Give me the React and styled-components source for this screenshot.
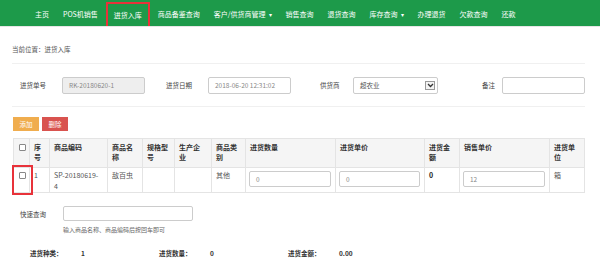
import React from 'react';
import styled, { createGlobalStyle } from 'styled-components';

const GlobalStyle = createGlobalStyle`
  body {
    margin: 0;
    background: #fff;
    font-family: "Noto Sans CJK SC", "Noto Sans", sans-serif;
    color: #333;
  }
  * { box-sizing: border-box; }
`;

const NavBar = styled.div`
  display: flex;
  align-items: flex-end;
  height: 27px;
  padding-left: 28px;
  background: #1d9a4a;
  border-bottom: 1px solid #e6e6e6;
`;

const NavItem = styled.div`
  display: flex;
  align-items: center;
  height: 24px;
  padding: 0 ${(p) => (p.$active ? '6px' : '7px')};
  margin: 0 ${(p) => (p.$active ? '1px' : '0')};
  font-size: 7px;
  color: #fff;
  white-space: nowrap;
  border: ${(p) => (p.$active ? '2px solid #e8323a' : 'none')};
  border-bottom: none;
`;

const Caret = styled.span`
  margin-left: 3px;
  font-size: 6px;
`;

const Page = styled.div`
  padding: 0 15px 0 12px;
`;

const Breadcrumb = styled.div`
  margin-top: 18px;
  font-size: 6.5px;
  line-height: 9px;
  color: #555;
`;

const FormPanel = styled.div`
  display: flex;
  align-items: center;
  height: 44px;
  margin-top: 9px;
  padding-left: 8px;
  border-top: 1px solid #f0f0f0;
  border-bottom: 1px solid #f0f0f0;
`;

const Field = styled.div`
  display: flex;
  align-items: center;
  margin-right: ${(p) => p.$gap || 0}px;
`;

const Label = styled.span`
  width: ${(p) => p.$w}px;
  font-size: 6.5px;
  color: #444;
  white-space: nowrap;
`;

const TextInput = styled.div`
  display: flex;
  align-items: center;
  width: ${(p) => p.$w}px;
  height: ${(p) => p.$h || 17}px;
  padding-left: 6px;
  font-size: 6.5px;
  font-weight: normal;
  color: #888;
  background: ${(p) => (p.$disabled ? '#eee' : '#fff')};
  border: 1px solid #ccc;
  border-radius: 2px;
`;

const SelectBox = styled(TextInput)`
  justify-content: space-between;
  padding-right: 2px;
  color: #555;
`;

const ArrowBox = styled.span`
  display: flex;
  align-items: center;
  justify-content: center;
  width: 10px;
  height: 9px;
  border: 1px solid #999;
  background: #f3f3f3;
`;

const ButtonRow = styled.div`
  display: flex;
  gap: 3px;
  margin-top: 10px;
  padding-left: 1px;
`;

const Button = styled.div`
  display: flex;
  align-items: center;
  justify-content: center;
  width: 26px;
  height: 14px;
  font-size: 6.5px;
  color: #fff;
  background: ${(p) => p.$bg};
`;

const Table = styled.table`
  margin-top: 7px;
  margin-left: 1px;
  width: 571px;
  border-collapse: collapse;
  table-layout: fixed;
  font-size: 7px;
`;

const Th = styled.th`
  height: 29px;
  padding: 3px 6px 3px 4px;
  text-align: left;
  vertical-align: top;
  line-height: 10px;
  font-weight: bold;
  color: #333;
  background: #f5f5f5;
  border: 1px solid #e4e4e4;
`;

const Td = styled.td`
  position: relative;
  height: 25px;
  padding: ${(p) => (p.$input ? '3px 4px 0 3px' : '2px 8px 0 4px')};
  vertical-align: top;
  line-height: 11px;
  color: ${(p) => (p.$bold ? '#222' : '#555')};
  font-weight: ${(p) => (p.$bold ? 'bold' : 'normal')};
  border: 1px solid #e4e4e4;
`;

const CheckBox = styled.span`
  display: inline-block;
  width: 7px;
  height: 7px;
  margin: 2px 0 0 1px;
  border: 1px solid #888;
  border-radius: 1px;
  background: #fff;
  vertical-align: top;
`;

const Marked = styled.div`
  position: absolute;
  left: -2px;
  top: -3px;
  width: 21px;
  height: 30px;
  border: 2px solid #e8323a;
  pointer-events: none;
`;

const CellInput = styled(TextInput)`
  width: 100%;
  height: 16px;
`;

const SearchRow = styled.div`
  display: flex;
  align-items: center;
  margin-top: 13px;
  padding-left: 8px;
`;

const Hint = styled.div`
  margin-top: 5px;
  padding-left: 51px;
  font-size: 6px;
  line-height: 8px;
  color: #666;
`;

const Summary = styled.div`
  display: flex;
  margin-top: 15px;
  padding-left: 18px;
  font-size: 6.5px;
  line-height: 9px;
  font-weight: bold;
  color: #333;
`;

const SumItem = styled.div`
  display: flex;
  width: 129px;
`;

const SumLabel = styled.span`
  width: 51px;
`;

const navItems = [
  { t: '主页' },
  { t: 'POS机销售' },
  { t: '进货入库', active: true },
  { t: '商品备鉴查询' },
  { t: '客户/供货商管理', caret: true },
  { t: '销售查询' },
  { t: '退货查询' },
  { t: '库存查询', caret: true },
  { t: '办理退货' },
  { t: '欠款查询' },
  { t: '还款' },
];

const columns = [
  { w: 16, t: null },
  { w: 20, t: '序号' },
  { w: 58, t: '商品编码' },
  { w: 35, t: '商品名称' },
  { w: 32, t: '规格型号' },
  { w: 37, t: '生产企业' },
  { w: 34, t: '商品类别' },
  { w: 90, t: '进货数量' },
  { w: 89, t: '进货单价' },
  { w: 35, t: '进货金额' },
  { w: 90, t: '销售单价' },
  { w: 35, t: '进货单位' },
];

function Chevron() {
  return (
    <svg width="7" height="5" viewBox="0 0 7 5">
      <path d="M1 1 L3.5 3.5 L6 1" fill="none" stroke="#333" strokeWidth="1.3" />
    </svg>
  );
}

export default function App() {
  return (
    <>
      <GlobalStyle />
      <NavBar>
        {navItems.map((n) => (
          <NavItem key={n.t} $active={n.active}>
            {n.t}
            {n.caret && <Caret>▾</Caret>}
          </NavItem>
        ))}
      </NavBar>
      <Page>
        <Breadcrumb>当前位置：进货入库</Breadcrumb>
        <FormPanel>
          <Field $gap={21}>
            <Label $w={42}>进货单号</Label>
            <TextInput $w={83} $disabled>RK-20180620-1</TextInput>
          </Field>
          <Field $gap={29}>
            <Label $w={42}>进货日期</Label>
            <TextInput $w={83}>2018-06-20 12:31:02</TextInput>
          </Field>
          <Field $gap={44}>
            <Label $w={33}>供货商</Label>
            <SelectBox $w={85}>
              超农业
              <ArrowBox>
                <Chevron />
              </ArrowBox>
            </SelectBox>
          </Field>
          <Field>
            <Label $w={20}>备注</Label>
            <TextInput $w={83} />
          </Field>
        </FormPanel>
        <ButtonRow>
          <Button $bg="#f0ad4e">添加</Button>
          <Button $bg="#d9534f">删除</Button>
        </ButtonRow>
        <Table>
          <colgroup>
            {columns.map((c, i) => (
              <col key={i} style={{ width: c.w }} />
            ))}
          </colgroup>
          <thead>
            <tr>
              {columns.map((c, i) => (
                <Th key={i}>{c.t === null ? <CheckBox /> : c.t}</Th>
              ))}
            </tr>
          </thead>
          <tbody>
            <tr>
              <Td>
                <CheckBox />
                <Marked />
              </Td>
              <Td>1</Td>
              <Td>SP-20180619-4</Td>
              <Td>敌百虫</Td>
              <Td />
              <Td />
              <Td>其他</Td>
              <Td $input>
                <CellInput>0</CellInput>
              </Td>
              <Td $input>
                <CellInput>0</CellInput>
              </Td>
              <Td $bold>0</Td>
              <Td $input>
                <CellInput>12</CellInput>
              </Td>
              <Td>箱</Td>
            </tr>
          </tbody>
        </Table>
        <SearchRow>
          <Label $w={43}>快速查询</Label>
          <TextInput $w={130} $h={15} />
        </SearchRow>
        <Hint>输入商品名称、商品编码后按回车即可</Hint>
        <Summary>
          <SumItem>
            <SumLabel>进货种类：</SumLabel>1
          </SumItem>
          <SumItem>
            <SumLabel>进货数量：</SumLabel>0
          </SumItem>
          <SumItem>
            <SumLabel>进货金额：</SumLabel>0.00
          </SumItem>
        </Summary>
      </Page>
    </>
  );
}
